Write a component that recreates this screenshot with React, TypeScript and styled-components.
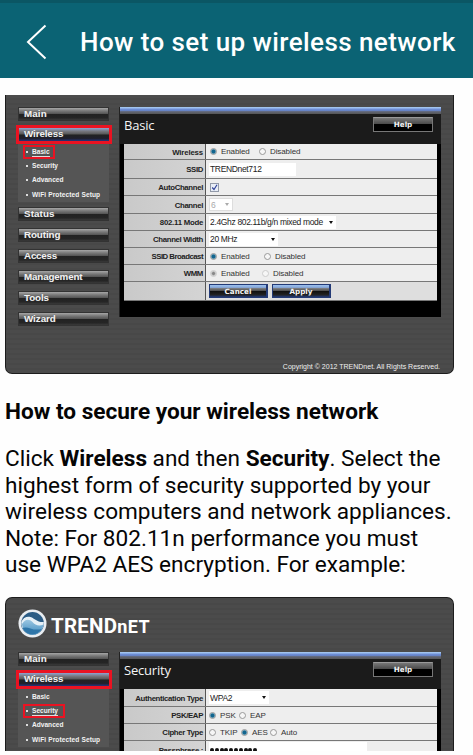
import React from "react";
import styled, { createGlobalStyle, css } from "styled-components";

const GlobalStyle = createGlobalStyle`
  * { box-sizing: border-box; }
  html, body { margin: 0; padding: 0; background: #fefefe; }
  body { height: 755px; overflow: hidden; }
`;

const Page = styled.div`
  width: 473px;
  height: 755px;
  overflow: hidden;
  display: flex;
  flex-direction: column;
  background: #fefefe;
  font-family: Roboto, sans-serif;
  color: #050505;
`;

const Header = styled.header`
  height: 78px;
  flex: none;
  display: flex;
  align-items: center;
  padding: 2px 0 0 26px;
  background: #0b6374;
  border-top: 3px solid #0b5664;
`;

const BackIcon = styled.svg`
  width: 22px;
  height: 36px;
  flex: none;
  margin-right: 32px;
`;

const Title = styled.h1`
  margin: 0;
  color: #fff;
  font: 500 26px/32px Roboto, sans-serif;
  letter-spacing: 0.43px;
  white-space: nowrap;
`;

const Article = styled.main`
  height: 673px;
  overflow: hidden;
  padding: 17px 0 0 5px;
`;

const SubHeading = styled.h2`
  margin: 24px 0 0;
  font: 700 22.6px/28px Roboto, sans-serif;
  white-space: nowrap;
`;

const Paragraph = styled.p`
  margin: 20px 0 17px;
  height: 134px;
  font: 400 22.6px/26.6px Roboto, sans-serif;
  white-space: nowrap;
`;

const Shot = styled.section<{ $top?: boolean }>`
  width: 449px;
  height: ${(p) => (p.$top ? "156px" : "279px")};
  display: flex;
  flex-direction: column;
  overflow: hidden;
  border: 1px solid #1d1d1d;
  ${(p) =>
    p.$top
      ? css`border-bottom: 0; border-radius: 7px 7px 0 0;`
      : css`border-top: 0; border-radius: 0 0 7px 7px;`}
  background: repeating-linear-gradient(0deg, #4b4b4b 0 3px, #484848 3px 5px);
  font-family: "Liberation Sans", Arial, sans-serif;
`;

const Brand = styled.div`
  height: 54px;
  flex: none;
  display: flex;
  align-items: center;
  padding: 0 0 2px 12px;
  color: #fff;
`;

const BrandMark = styled.svg`
  width: 30px;
  height: 30px;
  margin-right: 3px;
`;

const BrandName = styled.span`
  padding-top: 4px;
  font: 700 20.5px/22px Roboto, sans-serif;
  letter-spacing: 0.2px;
  white-space: nowrap;
`;

const BrandSmall = styled.span`
  font-size: 18px;
  letter-spacing: 0.5px;
`;

const Columns = styled.div<{ $pad: number }>`
  display: flex;
  align-items: flex-start;
  padding-top: ${(p) => p.$pad}px;
`;

const Side = styled.nav`
  width: 96px;
  flex: none;
  margin: 0 7px 0 10px;
  display: flex;
  flex-direction: column;
`;

const barFill = css`
  background: linear-gradient(180deg, #a6a6a6 0, #777 25%, #555 48%, #222 52%, #252525 82%, #3a3a3a 100%);
`;

const MenuButton = styled.div`
  height: 14px;
  margin: 0 3px 7px 2px;
  padding-left: 5px;
  border: 1px solid #333;
  ${barFill}
  color: #f1f1f1;
  font: 700 9.8px/11px "Liberation Sans", Arial, sans-serif;
  text-shadow: 0 0 1px #555;
  white-space: nowrap;
`;

const MenuLabel = styled.span<{ $spacing: number }>`
  letter-spacing: ${(p) => p.$spacing}px;
`;

const ActiveItem = styled.div`
  height: 19px;
  margin-top: -3px;
  padding-left: 5px;
  border: 3px solid #ea1322;
  background: linear-gradient(180deg, #8fa3d0 0, #77777d 25%, #555 48%, #222 52%, #20202c 80%, #25357c 100%);
  color: #f1f1f1;
  font: 700 9.8px/12px "Liberation Sans", Arial, sans-serif;
  letter-spacing: -0.1px;
  white-space: nowrap;
`;

const SubMenu = styled.div`
  height: 58px;
  margin: 0 3px 5px 2px;
  padding-top: 1px;
  background: #555;
  display: flex;
  flex-direction: column;
  align-items: flex-start;
`;

const SubItem = styled.div<{ $on?: boolean; $w?: number }>`
  height: 14.2px;
  padding-left: 1px;
  margin-left: 5px;
  width: ${(p) => (p.$w ? `${p.$w}px` : "auto")};
  border: 2.5px solid ${(p) => (p.$on ? "#ea1322" : "transparent")};
  display: flex;
  align-items: center;
  gap: 4px;
  color: #f2f2f2;
  font: 700 6.6px/8px "Liberation Sans", Arial, sans-serif;
  white-space: nowrap;

  &::before {
    content: "";
    width: 2px;
    height: 2px;
    flex: none;
    background: #ddd;
  }
`;

const SubText = styled.span<{ $u?: boolean; $spacing: number }>`
  letter-spacing: ${(p) => p.$spacing}px;
  border-bottom: ${(p) => (p.$u ? "1px solid #ddd" : "0")};
`;

const Panel = styled.div<{ $h: number }>`
  width: 322px;
  height: ${(p) => p.$h}px;
  flex: none;
  background: #000;
  border-left: 1px solid #222;
  display: flex;
  flex-direction: column;
`;

const BlueBar = styled.div`
  height: 7px;
  flex: none;
  background: linear-gradient(180deg, #a2c4ee 0 12%, #6f90d9 30%, #6682c4 52%, #626777 66%, #555 100%);
`;

const PanelHead = styled.div`
  height: 30px;
  flex: none;
  display: flex;
  align-items: flex-start;
  justify-content: space-between;
  padding: 3px 8px 0 4px;
  background: #1b1b1b;
`;

const PanelTitle = styled.h3<{ $spacing: number }>`
  margin: 0;
  color: #f5f5f5;
  font: 400 13px/17px "Open Sans", sans-serif;
  letter-spacing: ${(p) => p.$spacing}px;
`;

const HelpButton = styled.div`
  width: 60px;
  height: 15px;
  border: 1px solid #777;
  border-top-color: #999;
  background: linear-gradient(180deg, #777 0, #4a4a4a 45%, #000 50%, #000 100%);
  color: #f4f4f4;
  text-align: center;
  font: 700 7.2px/14px "DejaVu Sans", sans-serif;
`;

const Table = styled.div`
  width: 313px;
  margin-left: 4px;
  display: flex;
  flex-direction: column;
  background: #eee;
`;

const Row = styled.div<{ $h: number }>`
  height: ${(p) => p.$h}px;
  flex: none;
  display: flex;
  border-bottom: 1px solid #777;
`;

const LabelCell = styled.div`
  width: 82px;
  flex: none;
  display: flex;
  align-items: center;
  justify-content: flex-end;
  padding: 2px 2px 0 0;
  background: linear-gradient(90deg, #c9c9c9, #d4d4d4);
  border-right: 1px solid #555;
  color: #222;
  font: 700 7.8px/10px "Liberation Sans", Arial, sans-serif;
  white-space: nowrap;
`;

const LabelText = styled.span<{ $spacing: number }>`
  letter-spacing: ${(p) => p.$spacing}px;
`;

const ValueCell = styled.div<{ $tone?: string }>`
  flex: 1;
  display: flex;
  align-items: center;
  padding-left: 3px;
  background: ${(p) => p.$tone ?? "#eee"};
  color: #333;
  font: 400 8px/10px "Liberation Sans", Arial, sans-serif;
  white-space: nowrap;
`;

const Radio = styled.span<{ $on?: boolean; $dim?: boolean; $gap?: number }>`
  width: 7px;
  height: 7px;
  margin: 0 4px 0 ${(p) => p.$gap ?? 1}px;
  border-radius: 50%;
  border: 1px solid ${(p) => (p.$dim ? "#ccc" : "#999")};
  background: ${(p) =>
    p.$on
      ? p.$dim
        ? "radial-gradient(circle, #888 0 1px, #ddd 2.5px)"
        : "radial-gradient(circle, #12658e 0 1.4px, #b8d7e5 3px)"
      : "#f6f6f6"};
`;

const Option = styled.span<{ $w: number; $spacing?: number }>`
  width: ${(p) => p.$w}px;
  padding-top: 1px;
  letter-spacing: ${(p) => p.$spacing ?? -0.1}px;
`;

const Field = styled.span<{ $w: number; $h?: number; $dim?: boolean; $spacing?: number }>`
  width: ${(p) => p.$w}px;
  height: ${(p) => p.$h ?? 13}px;
  padding: 0 3px 0 1px;
  display: flex;
  align-items: center;
  justify-content: space-between;
  background: #fff;
  border: ${(p) => (p.$dim ? "1px solid #ddd" : "0")};
  color: ${(p) => (p.$dim ? "#aaa" : "#222")};
  font-size: 8.5px;
  letter-spacing: ${(p) => p.$spacing ?? -0.34}px;
`;

const Arrow = styled.span<{ $dim?: boolean }>`
  border: 2.5px solid transparent;
  border-top: 3px solid ${(p) => (p.$dim ? "#aaa" : "#111")};
  border-bottom: 0;
`;

const CheckIcon = styled.svg`
  width: 9px;
  height: 9px;
  margin-left: 1px;
`;

const ActionButton = styled.div`
  width: 59px;
  height: 14px;
  margin: 0 4px 0 0;
  border: 1px solid #233a76;
  border-right-width: 2px;
  background: linear-gradient(180deg, #9cc0ed 0, #86a8db 20%, #777 30%, #4b4b4b 50%, #111 54%, #222 82%, #233a76 100%);
  color: #f4f4f4;
  text-align: center;
  font: 700 7.2px/13px "DejaVu Sans", sans-serif;
`;

const Copyright = styled.div`
  margin: auto 13px 1px 0;
  align-self: flex-end;
  color: #eee;
  font: 400 7px/10px "Liberation Sans", Arial, sans-serif;
  white-space: nowrap;
`;

const Dots = styled.span`
  display: flex;
  gap: 0.8px;
`;

const Dot = styled.i`
  width: 4px;
  height: 4px;
  border-radius: 50%;
  background: #111;
`;

const MENU: [string, number][] = [
  ["Status", 0.1],
  ["Routing", -0.1],
  ["Access", -0.2],
  ["Management", -0.15],
  ["Tools", -0.1],
  ["Wizard", -0.05],
];

const SUB: [string, number, number][] = [
  ["Basic", 0, 32],
  ["Security", 0, 42],
  ["Advanced", 0, 50],
  ["WiFi Protected Setup", 0.1, 86],
];

function SideMenu({ active, full }: { active: string; full?: boolean }) {
  return (
    <Side>
      <MenuButton><MenuLabel $spacing={0.1}>Main</MenuLabel></MenuButton>
      <ActiveItem>Wireless</ActiveItem>
      <SubMenu>
        {SUB.map(([name, spacing, width]) => (
          <SubItem key={name} $on={name === active} $w={width}>
            <SubText $u={name === active} $spacing={spacing}>{name}</SubText>
          </SubItem>
        ))}
      </SubMenu>
      {full &&
        MENU.map(([name, spacing]) => (
          <MenuButton key={name}><MenuLabel $spacing={spacing}>{name}</MenuLabel></MenuButton>
        ))}
    </Side>
  );
}

function Setting({ label, h, spacing = -0.35, tone, children }: {
  label: string; h: number; spacing?: number; tone?: string; children: React.ReactNode;
}) {
  return (
    <Row $h={h}>
      <LabelCell><LabelText $spacing={spacing}>{label}</LabelText></LabelCell>
      <ValueCell $tone={tone}>{children}</ValueCell>
    </Row>
  );
}

function PanelTop({ title, spacing }: { title: string; spacing: number }) {
  return (
    <>
      <BlueBar />
      <PanelHead>
        <PanelTitle $spacing={spacing}>{title}</PanelTitle>
        <HelpButton>Help</HelpButton>
      </PanelHead>
    </>
  );
}

function BasicShot() {
  return (
    <Shot>
      <Columns $pad={12}>
        <SideMenu active="Basic" full />
        <Panel $h={210}>
          <PanelTop title="Basic" spacing={-0.2} />
          <Table>
            <Setting label="Wireless" h={16} spacing={-0.15}>
              <Radio $on /><Option $w={38}>Enabled</Option>
              <Radio $gap={0} /><Option $w={40}>Disabled</Option>
            </Setting>
            <Setting label="SSID" h={19}><Field $w={87}>TRENDnet712</Field></Setting>
            <Setting label="AutoChannel" h={17}>
              <CheckIcon viewBox="0 0 9 9">
                <rect x=".5" y=".5" width="8" height="8" fill="#e8edf6" stroke="#929aa9" />
                <path d="M2.2 4.5 4 6.5 7 1.8" fill="none" stroke="#31449a" strokeWidth="1.2" />
              </CheckIcon>
            </Setting>
            <Setting label="Channel" h={18}><Field $w={24} $dim>6<Arrow $dim /></Field></Setting>
            <Setting label="802.11 Mode" h={17} spacing={-0.25}><Field $w={127}>2.4Ghz 802.11b/g/n mixed mode<Arrow /></Field></Setting>
            <Setting label="Channel Width" h={17}><Field $w={69}>20 MHz<Arrow /></Field></Setting>
            <Setting label="SSID Broadcast" h={17} spacing={-0.5}>
              <Radio $on /><Option $w={43}>Enabled</Option>
              <Radio $gap={0} /><Option $w={40}>Disabled</Option>
            </Setting>
            <Setting label="WMM" h={17}>
              <Radio $on $dim /><Option $w={41}>Enabled</Option>
              <Radio $dim $gap={0} /><Option $w={40}>Disabled</Option>
            </Setting>
            <Setting label="" h={19} tone="#dedede">
              <ActionButton>Cancel</ActionButton>
              <ActionButton>Apply</ActionButton>
            </Setting>
          </Table>
        </Panel>
      </Columns>
      <Copyright>Copyright © 2012 TRENDnet. All Rights Reserved.</Copyright>
    </Shot>
  );
}

function SecurityShot() {
  return (
    <Shot $top>
      <Brand>
        <BrandMark viewBox="0 0 30 30">
          <defs>
            <linearGradient id="wave" x1="0" y1="0" x2="0" y2="1">
              <stop offset="0" stopColor="#9bc6e1" />
              <stop offset="1" stopColor="#3f8cc0" />
            </linearGradient>
          </defs>
          <circle cx="14.500" cy="14.500" r="14" fill="#e9edf1" />
          <circle cx="14.500" cy="14.500" r="11.400" fill="#2b5c85" />
          <path d="M3.300 13C5 8.500 9 7 12.500 8C17 9.500 19 13.500 25.800 13C26 20.500 20 25.700 14.500 25.700C8 25.700 3 20 3.300 13Z" fill="#e5eff6" />
          <path d="M4 15C7 10 11 9.500 14.500 13C17 16 21 17.500 25.500 15.500C24.500 21.500 20 25.700 14.500 25.700C9 25.700 4.500 21 4 15Z" fill="url(#wave)" />
          <path d="M4.500 19C10 16.500 14 22.500 24 20C19 27.500 8 27 4.500 19Z" fill="#2e75a8" />
        </BrandMark>
        <BrandName>TREND<BrandSmall>nET</BrandSmall></BrandName>
      </Brand>
      <Columns $pad={0}>
        <SideMenu active="Security" />
        <Panel $h={102}>
          <PanelTop title="Security" spacing={-0.2} />
          <Table>
            <Setting label="Authentication Type" h={18} spacing={-0.35}><Field $w={60}>WPA2<Arrow /></Field></Setting>
            <Setting label="PSK/EAP" h={17}>
              <Radio $on $gap={0} /><Option $w={19}>PSK</Option>
              <Radio $gap={0} /><Option $w={30}>EAP</Option>
            </Setting>
            <Setting label="Cipher Type" h={17}>
              <Radio $gap={0} /><Option $w={21}>TKIP</Option>
              <Radio $on $gap={0} /><Option $w={18}>AES</Option>
              <Radio $gap={0} /><Option $w={20}>Auto</Option>
            </Setting>
            <Setting label="Passphrase :" h={18}>
              <Field $w={158} $h={15}><Dots>{Array.from({ length: 10 }, (_, i) => <Dot key={i} />)}</Dots></Field>
            </Setting>
          </Table>
        </Panel>
      </Columns>
    </Shot>
  );
}

export default function App() {
  return (
    <>
      <GlobalStyle />
      <Page>
        <Header>
          <BackIcon viewBox="0 0 22 36" fill="none">
            <path d="M19.500 1.500 2 18 19.500 34.500" stroke="#fff" strokeWidth="2" />
          </BackIcon>
          <Title>How to set up wireless network</Title>
        </Header>
        <Article>
          <BasicShot />
          <SubHeading>How to secure your wireless network</SubHeading>
          <Paragraph>
            Click <b>Wireless</b> and then <b>Security</b>. Select the<br />
            highest form of security supported by your<br />
            wireless computers and network appliances.<br />
            Note: For 802.11n performance you must<br />
            use WPA2 AES encryption. For example:
          </Paragraph>
          <SecurityShot />
        </Article>
      </Page>
    </>
  );
}
